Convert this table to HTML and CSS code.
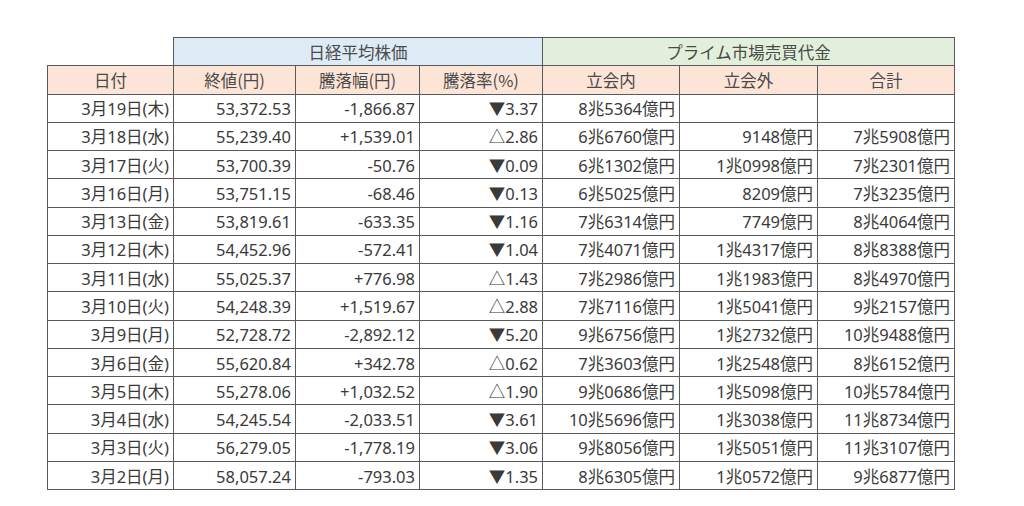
FILE: index.html
```html
<!DOCTYPE html>
<html lang="ja">
<head>
<meta charset="utf-8">
<link rel="stylesheet" href="styles.css">
</head>
<body>
<div class="wrap">
<table class="tbl">
  <colgroup>
    <col class="c-date"><col class="c-a"><col class="c-b"><col class="c-c"><col class="c-d"><col class="c-e"><col class="c-f">
  </colgroup>
  <thead>
    <tr class="r-group">
      <th class="blank"></th>
      <th class="g-blue" colspan="3">日経平均株価</th>
      <th class="g-green" colspan="3">プライム市場売買代金</th>
    </tr>
    <tr class="r-head">
      <th>日付</th><th>終値(円)</th><th>騰落幅(円)</th><th>騰落率(%)</th><th>立会内</th><th>立会外</th><th>合計</th>
    </tr>
  </thead>
  <tbody>
    <tr><td>3月19日(木)</td><td>53,372.53</td><td>-1,866.87</td><td>▼3.37</td><td>8兆5364億円</td><td></td><td></td></tr>
    <tr><td>3月18日(水)</td><td>55,239.40</td><td>+1,539.01</td><td>△2.86</td><td>6兆6760億円</td><td>9148億円</td><td>7兆5908億円</td></tr>
    <tr><td>3月17日(火)</td><td>53,700.39</td><td>-50.76</td><td>▼0.09</td><td>6兆1302億円</td><td>1兆0998億円</td><td>7兆2301億円</td></tr>
    <tr><td>3月16日(月)</td><td>53,751.15</td><td>-68.46</td><td>▼0.13</td><td>6兆5025億円</td><td>8209億円</td><td>7兆3235億円</td></tr>
    <tr><td>3月13日(金)</td><td>53,819.61</td><td>-633.35</td><td>▼1.16</td><td>7兆6314億円</td><td>7749億円</td><td>8兆4064億円</td></tr>
    <tr><td>3月12日(木)</td><td>54,452.96</td><td>-572.41</td><td>▼1.04</td><td>7兆4071億円</td><td>1兆4317億円</td><td>8兆8388億円</td></tr>
    <tr><td>3月11日(水)</td><td>55,025.37</td><td>+776.98</td><td>△1.43</td><td>7兆2986億円</td><td>1兆1983億円</td><td>8兆4970億円</td></tr>
    <tr><td>3月10日(火)</td><td>54,248.39</td><td>+1,519.67</td><td>△2.88</td><td>7兆7116億円</td><td>1兆5041億円</td><td>9兆2157億円</td></tr>
    <tr><td>3月9日(月)</td><td>52,728.72</td><td>-2,892.12</td><td>▼5.20</td><td>9兆6756億円</td><td>1兆2732億円</td><td>10兆9488億円</td></tr>
    <tr><td>3月6日(金)</td><td>55,620.84</td><td>+342.78</td><td>△0.62</td><td>7兆3603億円</td><td>1兆2548億円</td><td>8兆6152億円</td></tr>
    <tr><td>3月5日(木)</td><td>55,278.06</td><td>+1,032.52</td><td>△1.90</td><td>9兆0686億円</td><td>1兆5098億円</td><td>10兆5784億円</td></tr>
    <tr><td>3月4日(水)</td><td>54,245.54</td><td>-2,033.51</td><td>▼3.61</td><td>10兆5696億円</td><td>1兆3038億円</td><td>11兆8734億円</td></tr>
    <tr><td>3月3日(火)</td><td>56,279.05</td><td>-1,778.19</td><td>▼3.06</td><td>9兆8056億円</td><td>1兆5051億円</td><td>11兆3107億円</td></tr>
    <tr><td>3月2日(月)</td><td>58,057.24</td><td>-793.03</td><td>▼1.35</td><td>8兆6305億円</td><td>1兆0572億円</td><td>9兆6877億円</td></tr>
  </tbody>
</table>
</div>
</body>
</html>
```

FILE: styles.css
```css
html, body {
  margin: 0;
  padding: 0;
  background: #ffffff;
}

.wrap {
  padding: 37px 0 0 47px;
}

.tbl {
  border-collapse: collapse;
  table-layout: fixed;
  width: 908px;
  font-family: "Noto Sans", "Noto Sans CJK JP", sans-serif;
  font-size: 16.5px;
  color: #3a3a3a;
}

.c-date { width: 126px; }
.c-a { width: 122px; }
.c-b { width: 124px; }
.c-c { width: 123px; }
.c-d { width: 137px; }
.c-e { width: 138px; }
.c-f { width: 137px; }

.tbl tr {
  height: 28.28px;
}

.tbl th,
.tbl td {
  border: 1px solid #5a5a5a;
  padding: 2px 4px 0 0;
  line-height: 20px;
  vertical-align: middle;
  white-space: nowrap;
  overflow: hidden;
}

.tbl th {
  font-family: "Noto Sans CJK JP", "Noto Sans", sans-serif;
  font-weight: normal;
  text-align: center;
  padding: 0;
  color: #4a4a4a;
}

.tbl td {
  text-align: right;
}

.tbl th.blank {
  border: none;
  border-bottom: 1px solid #5a5a5a;
  background: transparent;
}

.g-blue {
  background: #ddebf7;
}

.g-green {
  background: #e2efda;
}

.r-head th {
  background: #fce4d6;
}
```
